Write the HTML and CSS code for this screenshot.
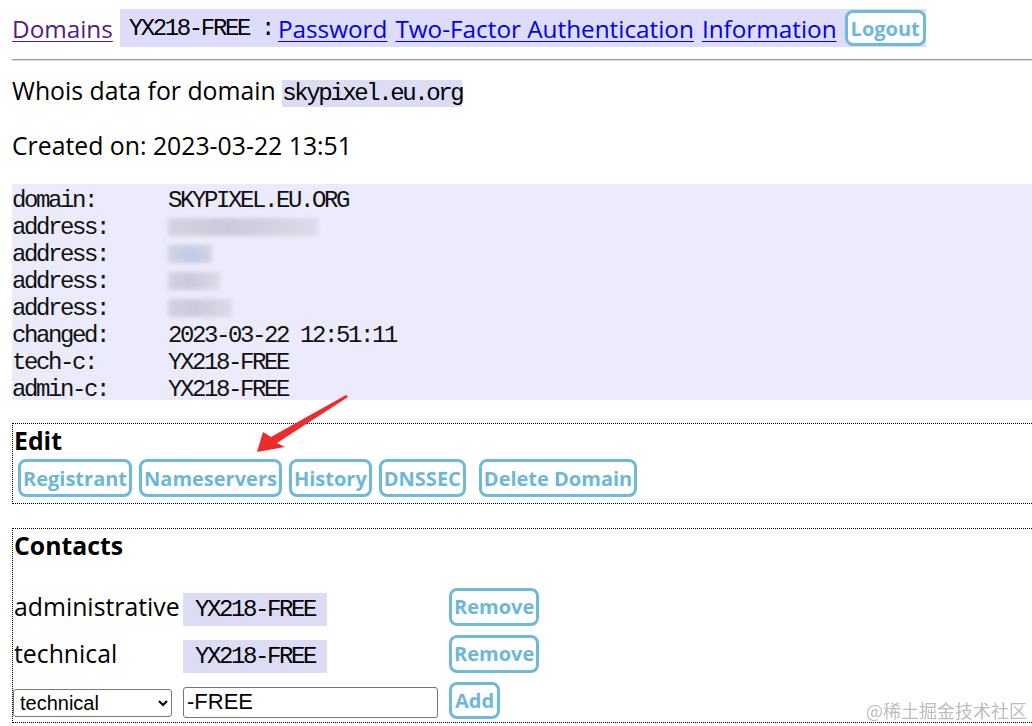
FILE: index.html
```html
<!DOCTYPE html>
<html lang="en">
<head>
<meta charset="utf-8">
<title>Domain skypixel.eu.org</title>
<link rel="stylesheet" href="styles.css">
</head>
<body>
<div class="page">
  <nav class="topbar">
    <a class="link visited" href="#">Domains</a>
    <span class="band">
      <span class="mono handle">YX218-FREE :</span>
      <a class="link" href="#">Password</a>
      <a class="link" href="#">Two-Factor Authentication</a>
      <a class="link" href="#">Information</a>
      <button class="btn logout">Logout</button>
    </span>
  </nav>
  <hr class="rule">
  <p class="line first">Whois data for domain <code class="mono code">skypixel.eu.org</code></p>
  <p class="line">Created on: 2023-03-22 13:51</p>
  <pre class="whois">domain:      SKYPIXEL.EU.ORG
address:     <span class="blur b1"></span>
address:     <span class="blur b2"></span>
address:     <span class="blur b3"></span>
address:     <span class="blur b4"></span>
changed:     2023-03-22 12:51:11
tech-c:      YX218-FREE
admin-c:     YX218-FREE</pre>

  <section class="box edit">
    <h3 class="box-title">Edit</h3>
    <div class="btn-row">
      <button class="btn">Registrant</button>
      <button class="btn">Nameservers</button>
      <button class="btn">History</button>
      <button class="btn">DNSSEC</button>
      <button class="btn delete">Delete Domain</button>
    </div>
  </section>

  <section class="box contacts">
    <h3 class="box-title">Contacts</h3>
    <div class="contact-grid">
      <div class="row">
        <span class="label">administrative</span>
        <span class="cell"><code class="mono code pad">YX218-FREE</code></span>
        <span class="cell"><button class="btn">Remove</button></span>
      </div>
      <div class="row">
        <span class="label">technical</span>
        <span class="cell"><code class="mono code pad">YX218-FREE</code></span>
        <span class="cell"><button class="btn">Remove</button></span>
      </div>
      <div class="row add-row">
        <span class="cell"><select class="sel"><option>technical</option><option>administrative</option></select></span>
        <span class="cell"><input class="inp" type="text" value="-FREE"></span>
        <span class="cell"><button class="btn add">Add</button></span>
      </div>
    </div>
  </section>
</div>

<svg class="arrow" width="1032" height="726" viewBox="0 0 1032 726" aria-hidden="true">
  <polygon points="346,395 271,437 263,432 257,452 285,447 277,443 348,397" fill="#ee2b2b"/>
</svg>
<div class="watermark">@稀土掘金技术社区</div>
</body>
</html>
```

FILE: styles.css
```css
html, body {
  margin: 0;
  padding: 0;
  background: #ffffff;
  overflow: hidden;
}
body {
  font-family: "Open Sans", "Noto Sans", sans-serif;
  font-size: 24.8px;
  color: #000;
  width: 1032px;
  height: 726px;
  position: relative;
}
.page {
  padding: 9px 0 0 12px;
  margin-right: -20px;
}
.mono {
  font-family: "Liberation Mono", "DejaVu Sans Mono", monospace;
  font-size: 24px;
  letter-spacing: -2.4px;
}
.topbar {
  display: flex;
  align-items: center;
  height: 38px;
  font-size: 24.3px;
}
.link {
  color: #0000ee;
  text-decoration: underline;
  text-underline-offset: 3px;
  text-decoration-thickness: 1px;
  margin-right: 8px;
}
.link.visited { color: #551a8b; margin-right: 7px; }
.band {
  display: flex;
  align-items: center;
  height: 38px;
  background: #dedcfb;
  padding-left: 9px;
}
.handle { margin-right: 5px; }
.btn {
  font-family: "Open Sans", "Noto Sans", sans-serif;
  font-weight: 700;
  font-size: 20px;
  color: #6db7d8;
  background: #fff;
  border: 3px solid #6fbad9;
  border-radius: 8px;
  height: 38px;
  padding: 0 2px;
  margin: 0;
}
.logout { height: 36px; margin-left: 0; padding: 0 3px; }
.rule {
  margin: 12px 0 0 0;
  border: 0;
  border-top: 1px solid #9a9a9a;
  border-bottom: 1px solid #dcdcdc;
  height: 0;
}
.line {
  margin: 0;
  height: 32px;
  line-height: 32px;
}
.line.first { margin-top: 13px; margin-bottom: 23px; }
.code { background: #dcdcf5; }
.pad { padding: 3px 12px; }
.whois {
  margin: 23px 0 0 0;
  box-sizing: border-box;
  height: 216px;
  padding-top: 3px;
  background: #ebebfc;
  font-family: "Liberation Mono", "DejaVu Sans Mono", monospace;
  font-size: 24px;
  letter-spacing: -2.4px;
  line-height: 27px;
  color: #111;
}
.blur {
  display: inline-block;
  height: 18px;
  vertical-align: -2px;
  background: linear-gradient(90deg, #cfcfdc, #c4c4d4 40%, #d8d8e6);
  opacity: 0.85;
  filter: blur(2px);
}
.b1 { width: 150px; }
.b2 { width: 44px; background: linear-gradient(90deg, #d0d0dc, #b9c6e2 50%, #d0d0dc); }
.b3 { width: 52px; }
.b4 { width: 64px; }
.box {
  border: 1px dotted #000;
}
.box-title {
  margin: 0;
  font-size: 24.8px;
  font-weight: 700;
  line-height: 32px;
  padding-left: 1px;
}
.edit { padding: 0 0 6px 0; margin-top: 23px; }
.btn-row {
  display: flex;
  gap: 7px;
  margin-top: 3px;
  padding-left: 5px;
}
.delete { margin-left: 6px; }
.contacts { padding: 0 0 4px 0; margin-top: 24px; }
.contact-grid {
  margin-top: 26px;
  display: flex;
  flex-direction: column;
  gap: 9px;
}
.row {
  display: grid;
  grid-template-columns: 170px 266px auto;
  align-items: center;
  height: 38px;
}
.label { padding-left: 1px; }
.add-row { height: 37px; }
.sel {
  width: 159px;
  height: 28px;
  font-family: "Liberation Sans", Arial, sans-serif;
  font-size: 20px;
  border: 1px solid #767676;
  border-radius: 3px;
  background: #fff;
  color: #000;
  padding: 0 2px;
}
.inp {
  width: 255px;
  height: 31px;
  box-sizing: border-box;
  font-family: "Liberation Sans", Arial, sans-serif;
  font-size: 22px;
  border: 1px solid #767676;
  border-radius: 3px;
  padding: 0 3px;
  color: #000;
}
.add { height: 37px; padding: 0 3px; }
.arrow {
  position: absolute;
  left: 0;
  top: 0;
  pointer-events: none;
}
.watermark {
  position: absolute;
  left: 866px;
  top: 697px;
  font-family: "Noto Sans CJK SC", sans-serif;
  font-size: 18px;
  color: #b5b5b5;
  opacity: 0.9;
}
```
